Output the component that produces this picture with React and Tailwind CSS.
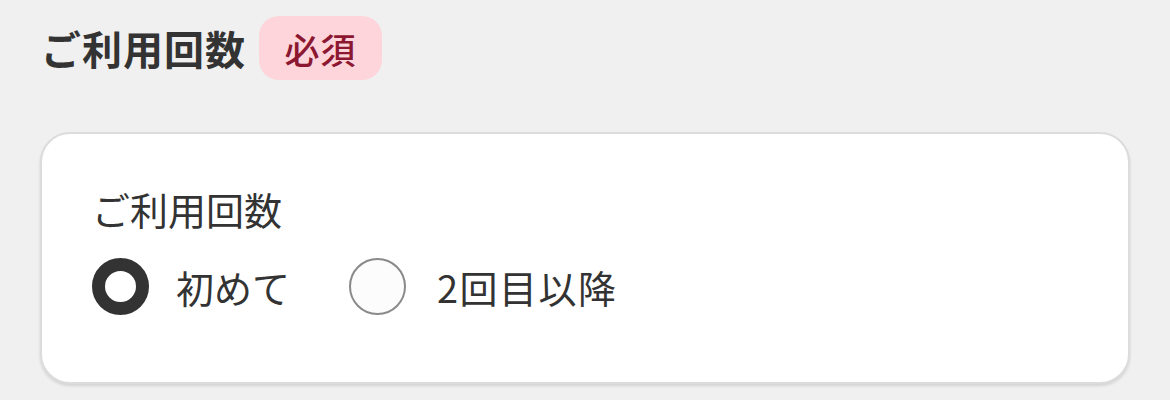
export default function App() {
  return (
    <div className="w-[1170px] h-[400px] bg-[#f0f0f0] text-[#333333] overflow-hidden" style={{ fontFamily: '"Noto Sans CJK JP", "Noto Sans", sans-serif' }}>
      <div className="flex items-center gap-[13px] pl-[41px] pt-[16px]">
        <h2 className="text-[40px] leading-none font-bold tracking-[1px]">ご利用回数</h2>
        <span className="flex items-center justify-center w-[123px] h-[64px] rounded-[20px] bg-[#fdd5db] text-[#8c1731] text-[35px] leading-none font-medium tracking-[1px]">必須</span>
      </div>
      <div className="mx-[40px] mt-[52px] h-[252px] rounded-[30px] bg-white border-2 border-[#dcdcdc] shadow-[0_2px_3px_rgba(0,0,0,0.12)] px-[50px] pt-[56px]">
        <div className="text-[38px] leading-none">ご利用回数</div>
        <div className="flex items-center mt-[30px]">
          <label className="flex items-center">
            <span className="w-[57px] h-[57px] rounded-full border-[13px] border-[#333333] bg-white" />
            <span className="ml-[27px] text-[38px] leading-none">初めて</span>
          </label>
          <label className="flex items-center ml-[59px]">
            <span className="w-[57px] h-[57px] rounded-full border-2 border-[#8a8a8a] bg-[#fcfcfc]" />
            <span className="ml-[31px] text-[38px] leading-none tracking-[1.5px]">2回目以降</span>
          </label>
        </div>
      </div>
    </div>
  );
}
